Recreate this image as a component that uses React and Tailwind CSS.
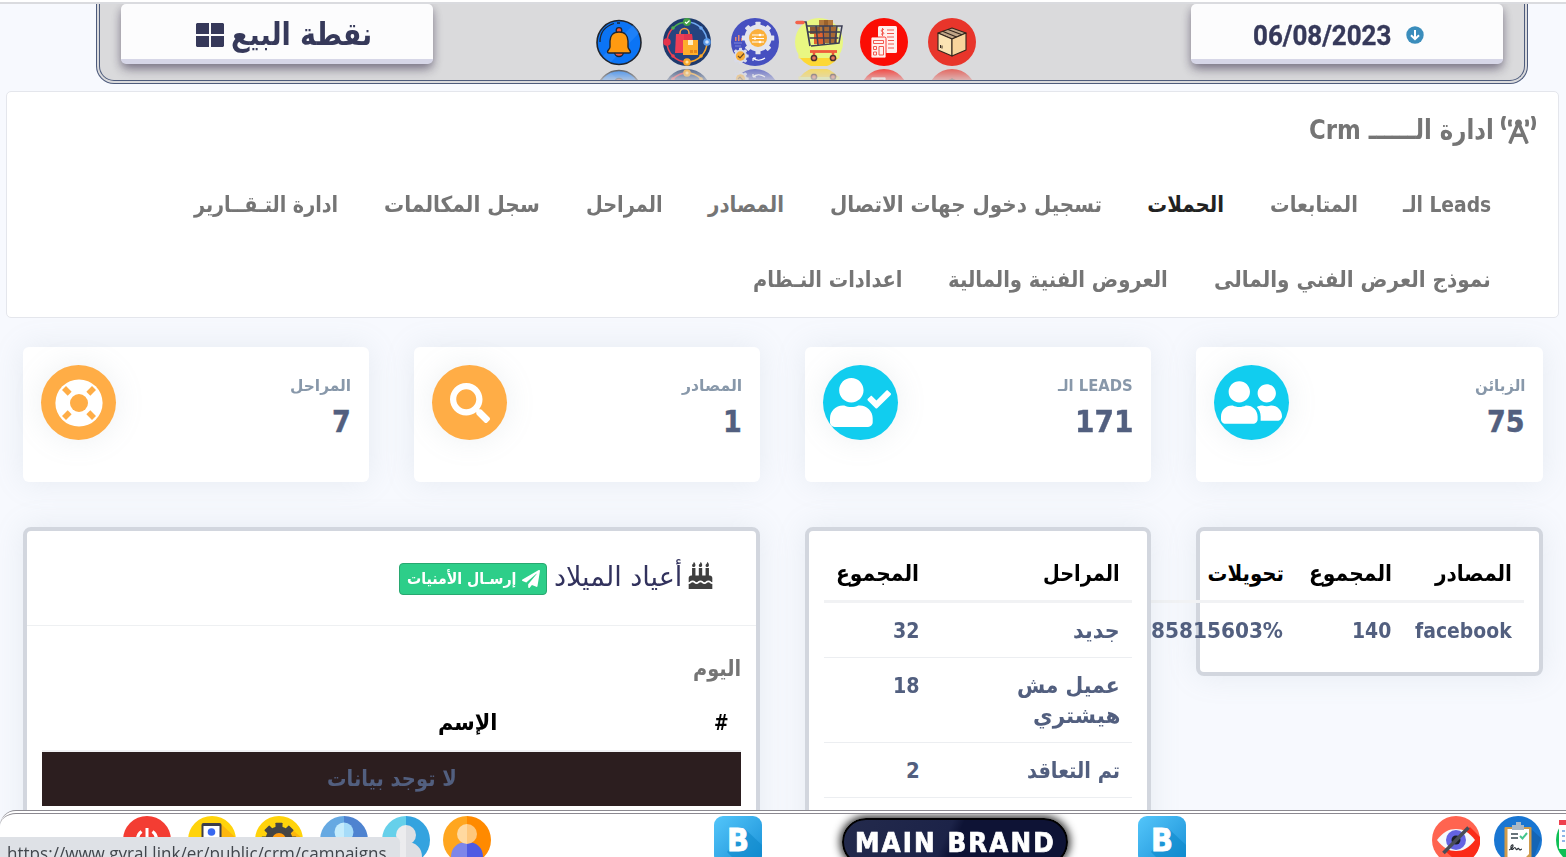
import React, { useLayoutEffect, useRef, useState } from "react";
import {
  FaBirthdayCake,
  FaBroadcastTower,
  FaPaperPlane,
  FaSearch,
  FaUserCheck,
  FaUserFriends,
} from "react-icons/fa";

// Keeps a single line of text at a fixed width by condensing or stretching it.
function Fit({ w, className = "", dir = "rtl", children }) {
  const ref = useRef(null);
  const [scale, setScale] = useState(1);
  useLayoutEffect(() => {
    setScale(w / ref.current.offsetWidth);
  }, [w]);
  return (
    <span dir={dir} className={"flex shrink-0 justify-start " + className} style={{ width: w }}>
      <span
        ref={ref}
        className={"block shrink-0 whitespace-nowrap " + (dir === "rtl" ? "origin-right" : "origin-left")}
        style={{ transform: `scaleX(${scale})` }}
      >
        {children}
      </span>
    </span>
  );
}

function Icon({ children, className = "" }) {
  return (
    <svg viewBox="0 0 48 48" className={"block size-12 shrink-0 " + className}>
      {children}
    </svg>
  );
}

const reflect =
  "[-webkit-box-reflect:below_3px_linear-gradient(transparent_65%,rgba(0,0,0,0.7))]";

function BellIcon() {
  return (
    <Icon className={reflect}>
      <circle cx="24" cy="24.500" r="22" fill="#0b74f5" stroke="#20242c" strokeWidth="1.600" />
      <path d="M8 38L38 7a22 22 0 0 1 6 8L16 44a22 22 0 0 1-8-6z" fill="#2f8cfb" opacity=".5" />
      <path d="M5 24C5 14 11 8 19 5.500M22 5h3" fill="none" stroke="#20242c" strokeWidth="1.300" />
      <circle cx="24" cy="12.500" r="2.800" fill="#f4563c" stroke="#20242c" strokeWidth="1.300" />
      <path d="M19.500 34a4.500 4.500 0 0 0 9 0z" fill="#f4563c" stroke="#20242c" strokeWidth="1.300" />
      <path
        d="M24 14c-6 0-9 4-9 9v6c0 2-2.500 3-2.500 5 0 .7.600 1 1.500 1h20c.9 0 1.500-.3 1.500-1 0-2-2.500-3-2.500-5v-6c0-5-3-9-9-9z"
        fill="#ff9a11"
        stroke="#20242c"
        strokeWidth="1.400"
      />
    </Icon>
  );
}

function ShoppingIcon() {
  return (
    <Icon className={reflect}>
      <circle cx="24" cy="24" r="24" fill="#1e3a6e" />
      <circle cx="24" cy="24" r="20" fill="#24447f" />
      <path d="M4 24A20 20 0 0 1 10 10" fill="none" stroke="#ef4050" strokeWidth="1.500" />
      <path d="M10 10A20 20 0 0 1 24 4" fill="none" stroke="#4caf50" strokeWidth="1.500" />
      <path d="M24 4A20 20 0 0 1 44 24" fill="none" stroke="#6fa8f0" strokeWidth="1.500" />
      <path d="M44 24A20 20 0 0 1 24 44" fill="none" stroke="#f9a72b" strokeWidth="1.500" />
      <path d="M24 44A20 20 0 0 1 4 24" fill="none" stroke="#ef4050" strokeWidth="1.500" />
      <path d="M17 17v-2a4.500 4.500 0 0 1 9 0v2" fill="none" stroke="#f9a03f" strokeWidth="1.500" />
      <path d="M13 16h16l1.500 19H12z" fill="#ef3e55" />
      <path d="M21 16h8l1.500 19H21z" fill="#e23650" />
      <rect x="20" y="22" width="15" height="15" fill="#fdae2b" />
      <rect x="25" y="22" width="5" height="5" fill="#fff0c4" />
      <path d="M27 32h3v3h-3zM31 32h3v3h-3z" fill="#e88718" />
      <circle cx="24" cy="4" r="4" fill="#43a047" />
      <path d="M22 4l1.500 1.500L26.500 2.500" fill="none" stroke="#fff" strokeWidth="1.200" />
      <circle cx="4" cy="24" r="3.800" fill="#e5334b" />
      <circle cx="44" cy="24" r="3.800" fill="#5b9bea" />
      <circle cx="44" cy="24" r="1.800" fill="#cfe2fb" />
      <circle cx="24" cy="44" r="3.800" fill="#f9a72b" />
      <circle cx="24" cy="44" r="1.600" fill="#ffe0a0" />
      <circle cx="10" cy="10" r="1.800" fill="#4caf50" />
      <circle cx="38" cy="10" r="1.800" fill="#6fa8f0" />
      <circle cx="38" cy="38" r="1.800" fill="#f9a72b" />
      <circle cx="10" cy="38" r="1.800" fill="#ef4050" />
    </Icon>
  );
}

function Gear({ cx, cy, r, fill, tooth, teeth = 8 }) {
  return (
    <g fill={fill}>
      <circle cx={cx} cy={cy} r={r} />
      {Array.from({ length: teeth }, (_, i) => (
        <rect
          key={i}
          x={cx - tooth / 2}
          y={cy - r - tooth * 0.55}
          width={tooth}
          height={tooth}
          rx=".6"
          transform={`rotate(${(i * 360) / teeth} ${cx} ${cy})`}
        />
      ))}
    </g>
  );
}

function ProcessIcon() {
  return (
    <Icon className={reflect}>
      <circle cx="24" cy="24" r="24" fill="#4650c0" />
      <Gear cx={27} cy={20} r={13.5} fill="#e3e5ee" tooth={5} />
      <circle cx="27" cy="20" r="9" fill="#fbb03b" />
      <path d="M21 17h12M21 20.500h12M21 24h12" stroke="#fff" strokeWidth="1" />
      <circle cx="29" cy="17" r="1.300" fill="#fff" />
      <circle cx="24" cy="20.500" r="1.300" fill="#fff" />
      <circle cx="29" cy="24" r="1.300" fill="#fff" />
      <path d="M4 19h1.500v4H4zM7 17h1.500v6H7zM10 20h1v3h-1z" fill="#e58a72" />
      <path d="M3 25h8M4 28h6" stroke="#7f88dd" strokeWidth="1" />
      <Gear cx={9.5} cy={38} r={6.5} fill="#d9dbe8" tooth={3} />
      <circle cx="9.500" cy="38" r="4.700" fill="#fbb03b" />
      <path d="M7 38l2 2 4-4.500" fill="none" stroke="#6a4a2a" strokeWidth="1.200" />
      <path d="M22 40c3 3 8 3 12 0M22 40v3M22 40h3" fill="none" stroke="#fff" strokeWidth="1.100" />
    </Icon>
  );
}

function CartIcon() {
  return (
    <Icon className={reflect}>
      <circle cx="24" cy="24" r="24" fill="#e9f782" />
      <path d="M3.500 36A24 24 0 0 0 44.500 36v4.500H3.500z" fill="#f3ef7c" />
      <path d="M5 40a24 24 0 0 0 38 0z" fill="#fdd835" />
      <rect x="24" y="2" width="14" height="12" fill="#b5793c" />
      <rect x="29" y="2" width="4" height="12" fill="#9a612c" />
      <rect x="19" y="14" width="11" height="12" fill="#e0622f" />
      <rect x="30" y="9" width="12" height="16" fill="#a86a35" />
      <rect x="15" y="9" width="10" height="7" fill="#8f5a32" />
      <path d="M3 4h8l4 24" fill="none" stroke="#3d3f55" strokeWidth="1.700" />
      <path d="M12 8h35l-3 17-28 3M13 14h32M14.500 20h29M21 8l2 19M28 8l1 18M35 8v18M42 8l-2 17" fill="none" stroke="#3d3f55" strokeWidth="1.500" />
      <path d="M2 4.500h6" stroke="#f4624a" strokeWidth="3.500" strokeLinecap="round" />
      <path d="M15 33.500h27" stroke="#ef5a3c" strokeWidth="2.800" />
      <path d="M19 34v4M38 34v4" stroke="#ef5a3c" strokeWidth="2.500" />
      <circle cx="19" cy="40" r="2.600" fill="#e9745a" stroke="#4b3430" strokeWidth="1.500" />
      <circle cx="38" cy="40" r="2.600" fill="#e9745a" stroke="#4b3430" strokeWidth="1.500" />
    </Icon>
  );
}

function InvoiceIcon() {
  return (
    <Icon className={reflect}>
      <circle cx="24" cy="24" r="24" fill="#fb0d05" />
      <rect x="18" y="8" width="19" height="27" rx="1.500" fill="#fff0ee" />
      <path d="M27 12h7M27 15.500h7M27 19h7M28 22.500h6M28 26h6M28 30h6" stroke="#f2584f" strokeWidth="1" />
      <path d="M24 11.500c-3-1-3.500 2-1.500 2.500s2 3-1.500 2M22.500 10v8" fill="none" stroke="#f2584f" strokeWidth="1" />
      <rect x="11" y="19" width="15" height="21" rx="1.500" fill="#fff0ee" stroke="#fb0d05" strokeWidth=".8" />
      <path d="M13.500 22.500h10v3h-10zM13.500 28.500h3v3h-3zM13.500 34h3v3h-3zM19 28.500h4.500V37H19z" fill="none" stroke="#f2584f" strokeWidth="1" />
    </Icon>
  );
}

function BoxIcon() {
  return (
    <Icon className={reflect}>
      <circle cx="24" cy="24" r="24" fill="#e8352b" />
      <g stroke="#33261d" strokeWidth="1.100" strokeLinejoin="round">
        <path d="M10 15l14-5 14 5-14 6z" fill="#c1a587" />
        <path d="M10 15l14 6v17l-14-6z" fill="#fbe3b3" />
        <path d="M38 15l-14 6v17l14-6z" fill="#f8d49c" />
        <path d="M14.500 13.300l14 5.700M20 11.500l14 5.200" fill="none" />
      </g>
      <path d="M12.500 27v3M14 27.500v3" stroke="#33261d" strokeWidth="1" />
    </Icon>
  );
}

function PowerIcon() {
  return (
    <Icon>
      <circle cx="24" cy="24" r="24" fill="#f33d33" />
      <path d="M18.500 15.500a9.500 9.500 0 1 0 11 0" fill="none" stroke="#fff" strokeWidth="3" />
      <path d="M24 12v10" stroke="#fff" strokeWidth="3" />
    </Icon>
  );
}

function ContactIcon() {
  return (
    <Icon className="ml-[17px]">
      <circle cx="24" cy="24" r="24" fill="#ffd30b" />
      <path d="M33 8l14 13-6 20H30z" fill="#fdb60c" />
      <rect x="13.500" y="7" width="20" height="32" rx="2" fill="#3b3d4a" />
      <rect x="15.500" y="10" width="16" height="24" fill="#fff" />
      <circle cx="23.500" cy="16" r="3.800" fill="#3667f0" />
      <path d="M17 26c0-4 3-5 6.500-5s6.500 1 6.500 5z" fill="#3667f0" />
    </Icon>
  );
}

function SettingsIcon() {
  return (
    <Icon className="ml-[19px]">
      <circle cx="24" cy="24" r="24" fill="#ffd30b" />
      <path d="M34 11l13 11-5 17-12 3z" fill="#fdb60c" />
      <Gear cx={24} cy={24} r={13.5} fill="#454545" tooth={7} />
      <circle cx="24" cy="24" r="7" fill="#ff9b0f" />
    </Icon>
  );
}

function PersonIcon({ className, left, right, head, headDark, body, bodyDark, cy = 18, r = 10 }) {
  return (
    <Icon className={className}>
      <path d="M24 0a24 24 0 0 0 0 48z" fill={left} />
      <path d="M24 0a24 24 0 0 1 0 48z" fill={right} />
      <path d="M24 26c-10 0-16 6-16 15a24 24 0 0 0 16 7z" fill={body} />
      <path d="M24 26c10 0 16 6 16 15a24 24 0 0 1-16 7z" fill={bodyDark} />
      <path d={`M24 ${cy - r}a${r} ${r} 0 0 0 0 ${2 * r}z`} fill={head} />
      <path d={`M24 ${cy - r}a${r} ${r} 0 0 1 0 ${2 * r}z`} fill={headDark} />
    </Icon>
  );
}

function BrandTile() {
  return (
    <div className="relative flex size-12 shrink-0 items-center justify-center overflow-hidden rounded-[9px] bg-gradient-to-br from-[#53c6fa] to-[#0f8fd6]">
      <svg viewBox="0 0 48 48" className="absolute inset-0 size-12">
        <path d="M31 13l17 16v19H25L13 36z" fill="#0d86c8" opacity=".55" />
      </svg>
      <span className="relative text-[32px] leading-[48px] font-bold text-white [-webkit-text-stroke:0.8px_#fff]">B</span>
    </div>
  );
}

function EyeIcon() {
  return (
    <Icon className="ml-[246px]">
      <circle cx="24" cy="24" r="24" fill="#ff6450" />
      <path d="M38 11l10 10a24 24 0 0 1-20 27L13 35z" fill="#fb2b18" />
      <path d="M5 24c6-8 12-11 19-11s13 3 19 11c-6 8-12 11-19 11S11 32 5 24z" fill="#f4f8fb" />
      <circle cx="24" cy="24" r="10" fill="#6463e2" />
      <circle cx="24" cy="24" r="4.500" fill="#1c2028" />
      <path d="M11.500 37L36.500 11.500" stroke="#494d57" strokeWidth="3.600" />
    </Icon>
  );
}

function ClipboardIcon() {
  return (
    <Icon className="ml-[14px]">
      <circle cx="24" cy="24" r="24" fill="#1976d2" />
      <path d="M37 13l10 9-8 22H20z" fill="#1565b5" />
      <rect x="10.500" y="11" width="27" height="34" rx="1" fill="#cf9b4b" />
      <path d="M13.500 13H35v25l-5 5H13.500z" fill="#fff" />
      <path d="M22 6h5v3h3v5H18V9h4z" fill="#a9b8c6" />
      <path d="M17 18h7M17 22h7" stroke="#37474f" strokeWidth="1.500" />
      <path d="M26 20l2.500 2.500L33 17" fill="none" stroke="#45c58c" strokeWidth="2" />
      <path d="M15 34c4-1 5-6 3-5s-1 6 1 4 2-2 3 0 2-2 3 0 2 0 3 0" fill="none" stroke="#2b3138" strokeWidth="1.200" />
    </Icon>
  );
}

function CalendarIcon() {
  return (
    <Icon className="ml-[14px]">
      <circle cx="24" cy="24" r="24" fill="#0fbf55" />
      <rect x="3" y="6" width="34" height="27" rx="1" fill="#fff" />
      <rect x="3" y="4" width="34" height="5" fill="#ee3f4d" />
      <path d="M6 15h3M6 20h3M6 25h3" stroke="#8fb6e8" strokeWidth="2" />
    </Icon>
  );
}

function LifeRing() {
  return (
    <svg viewBox="0 0 48 48" className="size-12">
      <circle cx="24" cy="24" r="23.600" fill="#fff" />
      <circle cx="24" cy="24" r="9" fill="#ffad46" />
      {[45, 135, 225, 315].map((a) => (
        <rect key={a} x="21.200" y="2.800" width="5.600" height="8" fill="#ffad46" transform={`rotate(${a} 24 24)`} />
      ))}
    </svg>
  );
}

const topButton =
  "flex h-[60px] w-[312px] shrink-0 rounded-[5px] border-b-[5px] border-[#d6d6e7] bg-[#fcfcfd] text-[#36395a] shadow-[0_4px_8px_rgba(45,35,66,0.4),0_7px_13px_-3px_rgba(45,35,66,0.3)]";

function Header() {
  return (
    <header dir="ltr" className="h-[82px] border-t-2 border-[#dadbdf]">
      <div className="ml-24 flex h-20 w-[1432px] overflow-hidden rounded-b-[18px] border-4 border-t-0 border-double border-[#4d5b7c] bg-[#dadadc] pl-[21px]">
        <div className={topButton + " pt-[4px] pl-[75px]"}>
          <svg viewBox="0 0 28 24" className="mt-[15px] h-6 w-7">
            <path d="M1 0h12v11H0V1zM15 0h12l1 1v10H15zM0 13h13v11H1l-1-1zM15 13h13v10l-1 1H15z" fill="#36395a" />
          </svg>
          <Fit w={141} className="ml-[7px] text-[31px] leading-[52px] font-bold">
            نقطة البيع
          </Fit>
        </div>
        <div className="ml-[162px] flex pt-[14px]">
          <BellIcon />
          <div className="ml-5"><ShoppingIcon /></div>
          <div className="ml-5"><ProcessIcon /></div>
          <div className="ml-4"><CartIcon /></div>
          <div className="ml-[17px]"><InvoiceIcon /></div>
          <div className="ml-5"><BoxIcon /></div>
        </div>
        <div className={topButton + " ml-[215px] pl-[62px]"}>
          <Fit dir="ltr" w={138} className="font-[Roboto,sans-serif] text-[28px] leading-[64px] font-bold [-webkit-text-stroke:0.4px_#36395a]">
            06/08/2023
          </Fit>
          <svg viewBox="0 0 18 18" className="mt-[22px] ml-[15px] size-[18px]">
            <circle cx="9" cy="9" r="8.700" fill="#3b8dbc" />
            <path d="M9 4v9M5 9.200l4 4 4-4" fill="none" stroke="#fff" strokeWidth="2" />
          </svg>
        </div>
      </div>
    </header>
  );
}

const navRows = [
  {
    gap: "gap-[45.5px]",
    items: [
      ["Leads الـ", 88],
      ["المتابعات", 88],
      ["الحملات", 77, true],
      ["تسجيل دخول جهات الاتصال", 272],
      ["المصادر", 76],
      ["المراحل", 77],
      ["سجل المكالمات", 156],
      ["ادارة التـقــارير", 144],
    ],
  },
  {
    gap: "gap-[46px]",
    items: [
      ["نموذج العرض الفني والمالى", 277],
      ["العروض الفنية والمالية", 220],
      ["اعدادات النـظام", 150],
    ],
  },
];

function CrmMenu() {
  return (
    <nav className="mr-[7px] ml-[6px] mt-[7px] h-[227px] rounded-[5px] border border-[#e4e6ec] bg-white text-[#757575]">
      <div className="flex h-[76px] items-center pr-[22px]">
        <FaBroadcastTower className="h-[28px] w-[35px]" />
        <Fit w={185} className="mr-[7px] text-[27px] leading-[40px] font-bold">
          ادارة الــــــ Crm
        </Fit>
      </div>
      {navRows.map((row, i) => (
        <div key={i} className={"flex h-[75px] pr-[67px] " + row.gap}>
          {row.items.map(([label, w, active]) => (
            <Fit key={label} w={w} className={"text-[22px] leading-[74px] font-bold " + (active ? "text-[#222]" : "")}>
              {label}
            </Fit>
          ))}
        </div>
      ))}
    </nav>
  );
}

const stats = [
  { label: "الزبائن", lw: 50, value: "75", vw: 38, icon: <FaUserFriends className="size-[61px]" />, color: "bg-[#11cdef]" },
  { label: "LEADS الـ", lw: 75, value: "171", vw: 58, icon: <FaUserCheck className="size-[61px]" />, color: "bg-[#11cdef]" },
  { label: "المصادر", lw: 60, value: "1", vw: 19, icon: <FaSearch className="size-10" />, color: "bg-[#ffad46]" },
  { label: "المراحل", lw: 61, value: "7", vw: 19, icon: <LifeRing />, color: "bg-[#ffad46]" },
];

function Stats() {
  return (
    <section className="mr-[23px] mt-[29px] grid grid-cols-[347px_346px_346px_346px] gap-[45px]">
      {stats.map((s) => (
        <div key={s.label} className="flex h-[135px] justify-between rounded-md bg-white p-[18px] shadow-[0_0_30px_rgba(136,152,170,0.15)]">
          <div className="pt-2">
            <Fit w={s.lw} className="text-[16px] leading-[26px] font-bold text-[#8898aa]">{s.label}</Fit>
            <Fit w={s.vw} dir="ltr" className="text-[30px] leading-[46px] font-bold text-[#525f7f] [-webkit-text-stroke:0.4px_#525f7f]">{s.value}</Fit>
          </div>
          <div className={"flex size-[75px] items-center justify-center rounded-full text-white shadow-[0_0_30px_rgba(136,152,170,0.15)] " + s.color}>
            {s.icon}
          </div>
        </div>
      ))}
    </section>
  );
}

const panel = "rounded-lg border-4 border-[#d2d6de] bg-white shadow-[0_0_30px_rgba(136,152,170,0.15)]";
const cell = "text-[22px] font-bold";

function Sources() {
  return (
    <div className={"h-[149px] w-[347px] shrink-0 pt-[14px] pr-[15px] " + panel}>
      <div className="w-[400px]">
        <div className="flex h-[58px] border-b-[3px] border-[#f1f2f4] pr-3 text-black">
          <Fit w={77} className={cell + " leading-[57px]"}>المصادر</Fit>
          <Fit w={83} className={cell + " mr-[43px] leading-[57px]"}>المجموع</Fit>
          <Fit w={76} className={cell + " mr-[25px] leading-[57px]"}>تحويلات</Fit>
        </div>
        <div className="flex h-[55px] pr-3 text-[#525f7f]">
          <Fit w={97} dir="ltr" className={cell + " leading-[56px]"}>facebook</Fit>
          <Fit w={39} dir="ltr" className={cell + " mr-6 leading-[56px]"}>140</Fit>
          <Fit w={132} dir="ltr" className={cell + " mr-[69px] leading-[56px]"}>85815603%</Fit>
        </div>
      </div>
    </div>
  );
}

const stages = [
  { lines: [["جديد", 47]], total: "32", tw: 27 },
  { lines: [["عميل مش", 103], ["هيشتري", 87]], total: "18", tw: 27 },
  { lines: [["تم التعاقد", 93]], total: "2", tw: 14 },
];

function Stages() {
  return (
    <div className={"relative h-[320px] w-[346px] shrink-0 pt-[14px] pr-[15px] pl-[15px] " + panel}>
      <div className="flex h-[58px] border-b-[3px] border-[#f1f2f4] pr-3 text-black">
        <div className="w-[201px]">
          <Fit w={77} className={cell + " leading-[57px]"}>المراحل</Fit>
        </div>
        <Fit w={83} className={cell + " leading-[57px]"}>المجموع</Fit>
      </div>
      {stages.map((s) => (
        <div key={s.total} className="flex border-b border-[#eceef1] pt-[13px] pr-3 pb-[11px] text-[#525f7f]">
          <div className="w-[200px]">
            {s.lines.map(([t, w]) => (
              <Fit key={t} w={w} className={cell + " leading-[30px]"}>{t}</Fit>
            ))}
          </div>
          <Fit w={s.tw} dir="ltr" className={cell + " leading-[30px]"}>{s.total}</Fit>
        </div>
      ))}
    </div>
  );
}

function Birthdays() {
  return (
    <div className={"h-[320px] w-[737px] shrink-0 " + panel}>
      <div className="flex h-[95px] items-center border-b border-[#eef0f2] pr-[42px]">
        <FaBirthdayCake className="mb-[5px] size-[27px] text-[#3f3f3f]" />
        <Fit w={128} className="mr-[5px] mb-[2px] text-[27px] leading-[40px] text-[#32325d]">أعياد الميلاد</Fit>
        <button className="mt-[2px] mr-[7px] flex h-8 w-[148px] items-center rounded-[4px] border border-[#28a870] bg-[#2dce89] pr-[6px] text-white">
          <FaPaperPlane className="size-[18px]" />
          <Fit w={109} className="mr-[6px] text-[16px] leading-[28px] font-bold">إرسـال الأمنيات</Fit>
        </button>
      </div>
      <div className="px-[15px] pt-[27px]">
        <Fit w={48} className={cell + " leading-[32px] text-[#757575]"}>اليوم</Fit>
        <div className="flex h-[67px] border-b-2 border-[#f1f2f4] pr-3 text-black">
          <Fit w={15} className={cell + " leading-[76px]"}>#</Fit>
          <Fit w={60} className={cell + " mr-[216px] leading-[76px]"}>الإسم</Fit>
        </div>
        <div className="flex h-[54px] justify-center bg-[#2c1e1f] text-[#525f7f]">
          <Fit w={130} className={cell + " leading-[54px]"}>لا توجد بيانات</Fit>
        </div>
      </div>
    </div>
  );
}

function Dock() {
  return (
    <footer
      dir="ltr"
      className="absolute inset-x-0 bottom-0 flex h-[47px] overflow-hidden rounded-tl-[16px] border-t-4 border-double border-[#8b8990] bg-white pt-[2px] pl-[123px]"
    >
      <PowerIcon />
      <ContactIcon />
      <SettingsIcon />
      <PersonIcon className="ml-[17px]" left="#66a9e2" right="#4e83d0" head="#c5ecfc" headDark="#a6dcf9" body="#3d72c4" bodyDark="#315fae" cy={16} r={9.5} />
      <PersonIcon className="ml-[14px]" left="#66d0ea" right="#34a3df" head="#ececee" headDark="#dedfe3" body="#ececee" bodyDark="#dedfe3" cy={19} />
      <PersonIcon className="ml-[13px]" left="#ffa61f" right="#ff8a00" head="#ffd9a0" headDark="#fec77c" body="#7d86ea" bodyDark="#4f5be3" />
      <div className="ml-[223px]"><BrandTile /></div>
      <div className="mt-[2px] ml-20 flex h-12 w-[226px] shrink-0 rounded-full border-2 border-black bg-[linear-gradient(115deg,#232a4c_0%,#1c2348_45%,#0e1335_50%,#0e1335_100%)] pl-[11px] shadow-[0_0_8px_2px_rgba(0,0,0,0.85)]">
        <Fit w={201} dir="ltr" className="text-[26px] leading-[46px] font-bold tracking-[2px] text-white [-webkit-text-stroke:0.7px_#fff]">MAIN BRAND</Fit>
      </div>
      <div className="ml-[70px]"><BrandTile /></div>
      <EyeIcon />
      <ClipboardIcon />
      <CalendarIcon />
    </footer>
  );
}

export default function App() {
  return (
    <div
      dir="rtl"
      className="relative h-[857px] w-[1566px] overflow-hidden bg-[#f7f9fe] pt-[2px] font-['DejaVu_Sans_Condensed','DejaVu_Sans',sans-serif] shadow-[inset_0_2px_0_#fff]"
    >
      <Header />
      <CrmMenu />
      <Stats />
      <main className="mr-[23px] mt-[45px] flex items-start gap-[45px]">
        <Sources />
        <Stages />
        <Birthdays />
      </main>
      <Dock />
      <div
        dir="ltr"
        className="absolute bottom-0 left-0 h-[20px] w-[400px] overflow-hidden rounded-tr-[5px] bg-[#dee1e6] pl-[7px] text-[#42464c]"
      >
        <Fit w={380} dir="ltr" className="font-['Open_Sans',sans-serif] text-[18px] leading-[32px]">
          https://www.gyral.link/er/public/crm/campaigns
        </Fit>
      </div>
    </div>
  );
}
